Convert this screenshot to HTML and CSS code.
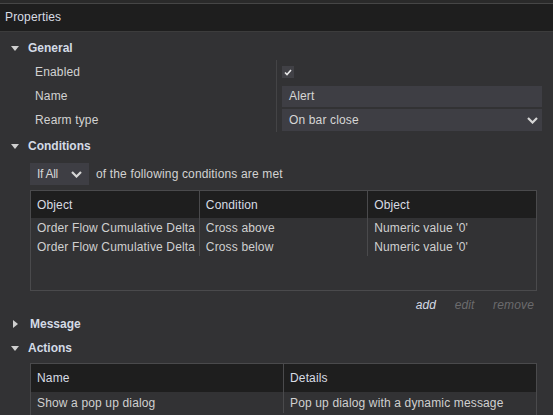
FILE: index.html
```html
<!DOCTYPE html>
<html lang="en">
<head>
    <meta charset="UTF-8">
    <title>Properties</title>
    <link rel="stylesheet" href="styles.css">
</head>
<body>
    <div class="topstrip"></div>
    <div class="titlebar">Properties</div>

    <div class="panel">
        <div class="section-head"><span class="caret down"></span>General</div>
        <div class="props">
            <div class="prop-labels">
                <div class="prop-row">Enabled</div>
                <div class="prop-row">Name</div>
                <div class="prop-row">Rearm type</div>
            </div>
            <div class="prop-values">
                <div class="prop-row">
                    <span class="check">
                        <svg width="8" height="7" viewBox="0 0 8 7"><polyline points="1,3.5 3,5.5 7,1" fill="none" stroke="#e8e8e8" stroke-width="1.6"/></svg>
                    </span>
                </div>
                <div class="prop-row">
                    <div class="input">Alert</div>
                </div>
                <div class="prop-row">
                    <div class="input select">
                        <span>On bar close</span>
                        <svg class="chev" width="11" height="7" viewBox="0 0 11 7"><polyline points="1,1 5.5,5.5 10,1" fill="none" stroke="#d6d6d6" stroke-width="2.2"/></svg>
                    </div>
                </div>
            </div>
        </div>

        <div class="section-head cond-head"><span class="caret down"></span>Conditions</div>
        <div class="cond-line">
            <div class="input select small">
                <span>If All</span>
                <svg class="chev" width="11" height="7" viewBox="0 0 11 7"><polyline points="1,1 5.5,5.5 10,1" fill="none" stroke="#d6d6d6" stroke-width="2.2"/></svg>
            </div>
            <span class="cond-text">of the following conditions are met</span>
        </div>

        <div class="grid-box cond-box">
            <table class="grid thirds">
                <tr><th>Object</th><th>Condition</th><th>Object</th></tr>
                <tr><td>Order Flow Cumulative Delta</td><td>Cross above</td><td>Numeric value '0'</td></tr>
                <tr><td>Order Flow Cumulative Delta</td><td>Cross below</td><td>Numeric value '0'</td></tr>
            </table>
        </div>

        <div class="links">
            <span class="link active">add</span>
            <span class="link">edit</span>
            <span class="link">remove</span>
        </div>

        <div class="section-head"><span class="caret right"></span>Message</div>
        <div class="section-head"><span class="caret down"></span>Actions</div>

        <div class="grid-box action-box">
            <table class="grid halves">
                <tr><th>Name</th><th>Details</th></tr>
                <tr><td>Show a pop up dialog</td><td>Pop up dialog with a dynamic message</td></tr>
            </table>
        </div>
    </div>
</body>
</html>
```

FILE: styles.css
```css
html, body {
    margin: 0;
    padding: 0;
}
body {
    width: 553px;
    height: 415px;
    overflow: hidden;
    background: #323234;
    font-family: "Liberation Sans", Arial, sans-serif;
    font-size: 12px;
    letter-spacing: 0.15px;
    color: #d2d2d2;
}
.topstrip {
    height: 3px;
    background: #2a2a2a;
    border-bottom: 1px solid #464646;
}
.titlebar {
    height: 27px;
    line-height: 27px;
    padding-left: 5px;
    background: #1e1e1e;
    border-bottom: 1px solid #3c3c3c;
    color: #d8dce4;
}
.panel {
    padding-top: 4px;
}
.section-head {
    height: 24px;
    line-height: 24px;
    padding-left: 11px;
    font-weight: bold;
    letter-spacing: 0;
    color: #d4dbe6;
    display: flex;
    align-items: center;
}
.cond-head {
    margin-top: 2px;
}
.caret {
    display: inline-block;
    width: 0;
    height: 0;
    margin-right: 9px;
}
.caret.down {
    border-left: 4.5px solid transparent;
    border-right: 4.5px solid transparent;
    border-top: 5px solid #cfcfcf;
}
.caret.right {
    margin-left: 2px;
    margin-right: 12px;
    border-top: 4.5px solid transparent;
    border-bottom: 4.5px solid transparent;
    border-left: 5px solid #cfcfcf;
}

/* General properties */
.props {
    display: flex;
    padding-left: 35px;
}
.prop-labels {
    width: 241px;
}
.prop-values {
    flex: 1;
    border-left: 1px solid #444446;
    padding-left: 5px;
    margin-right: 11px;
}
.prop-row {
    height: 24px;
    display: flex;
    align-items: center;
}
.check {
    width: 12px;
    height: 12px;
    background: #414146;
    display: flex;
    align-items: center;
    justify-content: center;
}
.input {
    flex: 1;
    height: 21px;
    line-height: 21px;
    padding-left: 7px;
    background: #3e3e44;
    color: #d6d6d6;
}
.select {
    height: 22px;
    line-height: 22px;
    display: flex;
    align-items: center;
    justify-content: space-between;
    padding-right: 4px;
}

/* Conditions */
.cond-line {
    display: flex;
    align-items: center;
    margin-top: 5px;
    padding-left: 30px;
}
.select.small {
    flex: none;
    width: 45px;
    padding-left: 7px;
    padding-right: 7px;
    letter-spacing: -0.3px;
}
.cond-text {
    margin-left: 7px;
}
.grid-box {
    margin-left: 30px;
    width: 505px;
    border: 1px solid #4a4a4c;
}
.cond-box {
    margin-top: 5px;
    height: 99px;
}
.action-box {
    margin-top: 3px;
    height: 60px;
    border-bottom: none;
}
.grid {
    width: 100%;
    border-collapse: collapse;
    table-layout: fixed;
}
.grid th {
    height: 27px;
    background: #1e1e1e;
    font-weight: normal;
    text-align: left;
    color: #d8dce4;
    padding: 0 0 0 6px;
}
.grid td {
    height: 19px;
    padding: 0 0 0 6px;
    white-space: nowrap;
    color: #d0d0d0;
}
.grid th + th,
.grid td + td {
    border-left: 1px solid #4a4a4c;
}
.halves th {
    height: 28px;
}
.halves td {
    height: 21px;
}

.links {
    text-align: right;
    padding: 7px 19px 0 0;
    height: 14px;
    line-height: 14px;
    font-style: italic;
}
.link {
    color: #6b6b6d;
    margin-left: 15px;
}
.link.active {
    color: #d4dbe6;
}
```
